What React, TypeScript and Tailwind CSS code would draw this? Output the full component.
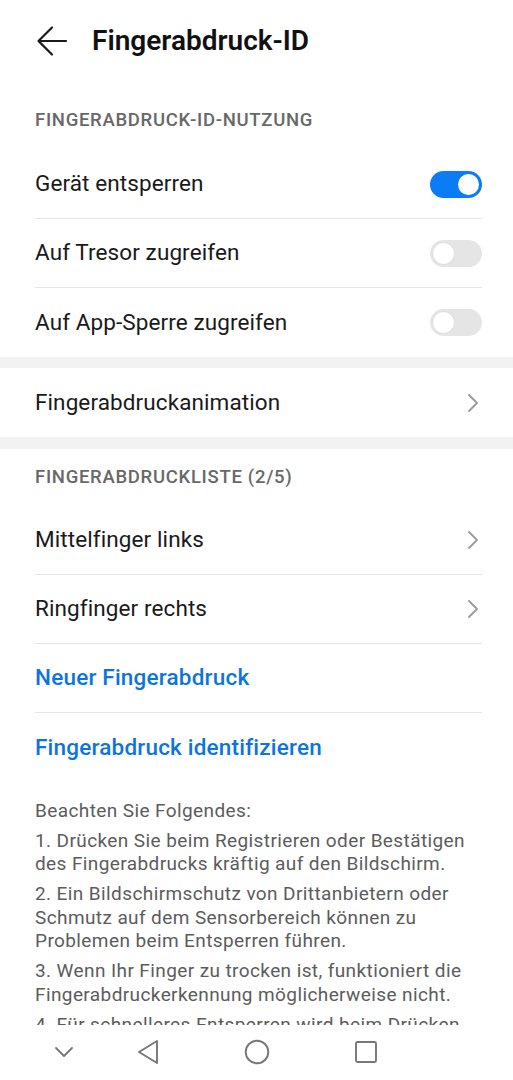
const font = { fontFamily: 'Roboto, "Noto Sans", sans-serif' };

function Toggle({ on }: { on: boolean }) {
  return on ? (
    <div className="flex h-[27px] w-[52px] items-center justify-end rounded-full bg-[#0a7cf4] pr-[3px]">
      <div className="h-[21px] w-[21px] rounded-full bg-white" />
    </div>
  ) : (
    <div className="flex h-[27px] w-[52px] items-center rounded-full bg-[#e5e5e5] pl-[2px]">
      <div className="h-[23px] w-[23px] rounded-full border border-[#dcdcdc] bg-white" />
    </div>
  );
}

function Chevron() {
  return (
    <svg width="14" height="20" viewBox="0 0 14 20" className="mr-[2px]">
      <path d="M3 2 L11 10 L3 18" fill="none" stroke="#9a9a9a" strokeWidth="1.8" strokeLinecap="round" strokeLinejoin="round" />
    </svg>
  );
}

function Row({ label, right, divider = true, blue = false }: { label: string; right?: React.ReactNode; divider?: boolean; blue?: boolean }) {
  return (
    <div className={'ml-[35px] mr-[31px] flex h-[69px] items-center justify-between ' + (divider ? 'border-b border-[#e6e6e6]' : '')}>
      <span
        className={
          blue
            ? 'text-[22.5px] font-medium tracking-[0.2px] text-[#0b74de]'
            : 'text-[22.5px] tracking-[0.1px] text-[#1a1a1a]'
        }
      >
        {label}
      </span>
      {right}
    </div>
  );
}

function SectionTitle({ children, className }: { children: string; className: string }) {
  return (
    <div className={'flex items-center px-[35px] text-[18.5px] font-medium tracking-[0.7px] text-[#686868] ' + className}>
      {children}
    </div>
  );
}

const notes: string[][] = [
  ['Beachten Sie Folgendes:'],
  ['1. Drücken Sie beim Registrieren oder Bestätigen', 'des Fingerabdrucks kräftig auf den Bildschirm.'],
  ['2. Ein Bildschirmschutz von Drittanbietern oder', 'Schmutz auf dem Sensorbereich können zu', 'Problemen beim Entsperren führen.'],
  ['3. Wenn Ihr Finger zu trocken ist, funktioniert die', 'Fingerabdruckerkennung möglicherweise nicht.'],
  ['4. Für schnelleres Entsperren wird beim Drücken', 'des Sensors der Fingerabdruck sofort erkannt.'],
];

export default function App() {
  return (
    <div className="flex h-[1080px] w-[513px] flex-col overflow-hidden bg-white" style={font}>
      <div className="flex-1 overflow-hidden">
        <div className="flex h-[82px] items-center">
          <svg width="32" height="32" viewBox="0 0 32 32" className="ml-[36px]">
            <path d="M30 16 H3 M16 2.5 L2.5 16 L16 29.5" fill="none" stroke="#1a1a1a" strokeWidth="2.2" strokeLinecap="round" strokeLinejoin="round" />
          </svg>
          <h1 className="ml-[24px] text-[28px] font-semibold text-[#111111]">Fingerabdruck-ID</h1>
        </div>

        <SectionTitle className="h-[68px] pt-[10px]">FINGERABDRUCK-ID-NUTZUNG</SectionTitle>
        <Row label="Gerät entsperren" right={<Toggle on />} />
        <Row label="Auf Tresor zugreifen" right={<Toggle on={false} />} />
        <Row label="Auf App-Sperre zugreifen" right={<Toggle on={false} />} divider={false} />

        <div className="h-[11px] bg-[#f2f2f2]" />
        <Row label="Fingerabdruckanimation" right={<Chevron />} divider={false} />
        <div className="h-[12px] bg-[#f2f2f2]" />

        <SectionTitle className="h-[57px]">FINGERABDRUCKLISTE (2/5)</SectionTitle>
        <Row label="Mittelfinger links" right={<Chevron />} />
        <Row label="Ringfinger rechts" right={<Chevron />} />
        <Row label="Neuer Fingerabdruck" blue />
        <Row label="Fingerabdruck identifizieren" blue divider={false} />

        <div className="px-[35px] pt-[17px] text-[19px] leading-[23.4px] tracking-[0.4px] whitespace-nowrap text-[#5c5c5c]">
          {notes.map((lines) => (
            <p key={lines[0]} className="mb-[6.6px]">
              {lines.map((l) => (
                <span key={l} className="block">
                  {l}
                </span>
              ))}
            </p>
          ))}
        </div>
      </div>

      <div className="flex h-[55px] shrink-0 items-center bg-white pb-[2px]">
        <svg width="22" height="14" viewBox="0 0 22 14" className="ml-[53px]">
          <path d="M3 3 L11 11 L19 3" fill="none" stroke="#777" strokeWidth="1.8" strokeLinecap="round" strokeLinejoin="round" />
        </svg>
        <svg width="26" height="26" viewBox="0 0 26 26" className="ml-[60px]">
          <path d="M22 2 L4 13 L22 24 Z" fill="none" stroke="#777" strokeWidth="1.9" strokeLinejoin="round" />
        </svg>
        <svg width="26" height="26" viewBox="0 0 26 26" className="ml-[83px]">
          <circle cx="13" cy="13" r="11.3" fill="none" stroke="#777" strokeWidth="1.9" />
        </svg>
        <svg width="24" height="24" viewBox="0 0 24 24" className="ml-[84px]">
          <rect x="2" y="2" width="20" height="20" rx="1.5" fill="none" stroke="#777" strokeWidth="1.9" />
        </svg>
      </div>
    </div>
  );
}
